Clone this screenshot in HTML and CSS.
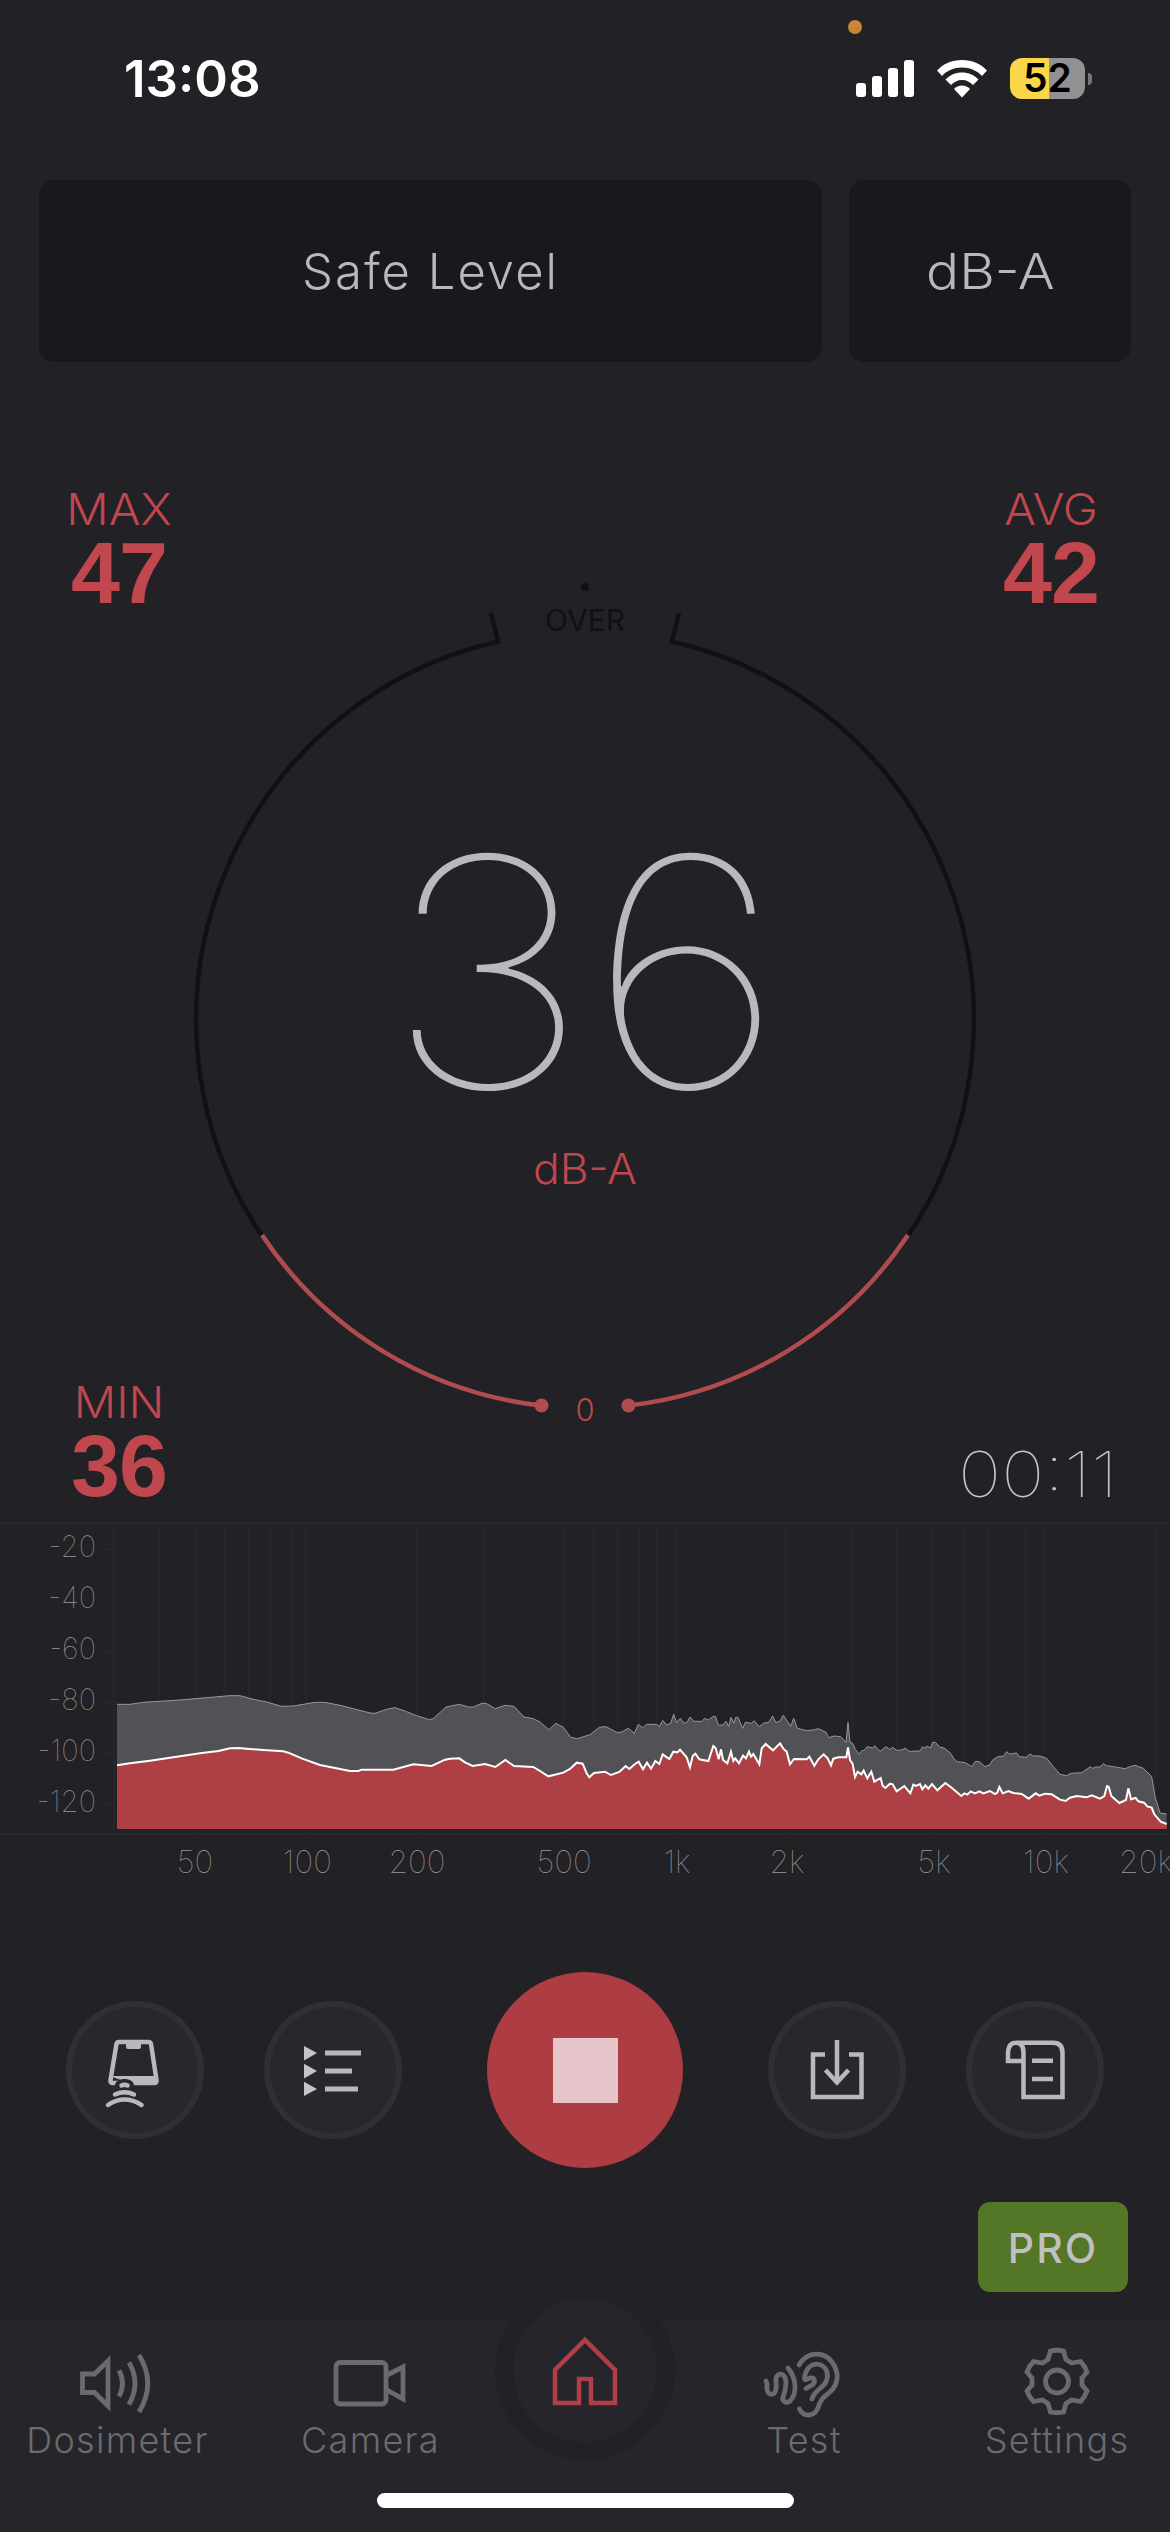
FILE: index.html
```html
<!DOCTYPE html>
<html lang="en">
<head>
  <meta charset="UTF-8">
  <title>Sound Meter</title>
  <link rel="stylesheet" href="styles.css">
</head>
<body>
  <div class="status-bar">
    <span class="mic-dot"></span>
    <span class="time">13:08</span>
    <div class="status-icons">
      <svg class="signal" viewBox="0 0 58 38">
        <rect x="0" y="23" width="10" height="14" rx="3"/>
        <rect x="16" y="16" width="10" height="21" rx="3"/>
        <rect x="32" y="8" width="10" height="29" rx="3"/>
        <rect x="48" y="0" width="10" height="37" rx="3"/>
      </svg>
      <svg class="wifi" viewBox="0 0 50 38">
        <path d="M25 0C35 0 44 4 50 10.500L45 16C40 10.500 33 7.500 25 7.500S10 10.500 5 16L0 10.500C6 4 15 0 25 0Z"/>
        <path d="M25 12.500C31.500 12.500 37 15 41.500 19.500L36 25C33 22 29.500 20 25 20S17 22 14 25L8.500 19.500C13 15 18.500 12.500 25 12.500Z"/>
        <path d="M25 25.500C28 25.500 31 27 33 29L25 37.500L17 29C19 27 22 25.500 25 25.500Z"/>
      </svg>
      <div class="battery"><span>52</span></div>
    </div>
  </div>

  <div class="top-row">
    <div class="card level">Safe Level</div>
    <div class="card unit"><span>dB-A</span></div>
  </div>

  <div class="meter">
    <svg class="dial" viewBox="0 362 1170 1148">
      <circle class="dark-dot" cx="585" cy="587" r="4"/>
      <text class="over" x="585" y="631" textLength="80">OVER</text>
      <path class="arc" d="M491 613L498 641.500A388 388 0 0 0 262 1236"/>
      <path class="arc" d="M679 613L672 641.500A388 388 0 0 1 908 1236"/>
      <path class="arc active" d="M262 1235A388 388 0 0 0 541 1405.500"/>
      <path class="arc active" d="M908 1235A388 388 0 0 1 629 1405.500"/>
      <circle class="red-dot" cx="541.500" cy="1405.500" r="7"/>
      <circle class="red-dot" cx="628.500" cy="1405.500" r="7"/>
      <text class="zero" x="585" y="1421">0</text>
      <text class="value" transform="translate(585 1088) scale(1.09 1)">36</text>
      <text class="value-unit" x="585" y="1184" textLength="104" lengthAdjust="spacingAndGlyphs">dB-A</text>
    </svg>
    <div class="readouts">
      <div class="readout-row">
        <div class="readout"><span>MAX</span><b>47</b></div>
        <div class="readout"><span>AVG</span><b>42</b></div>
      </div>
      <div class="readout-row">
        <div class="readout"><span>MIN</span><b>36</b></div>
        <div class="timer">00:11</div>
      </div>
    </div>
  </div>

  <!-- spectrum, 3 units per pixel -->
  <svg class="spectrum" viewBox="0 0 3510 1140">
    <path class="rule" d="M0 40H3510M0 972H3510"/>
    <path class="grid" d="M342 44V962M477 44V962M585 44V988M675 44V962M747 44V962M810 44V962M874 44V962M918 44V988M1251 44V988M1449 44V962M1584 44V962M1692 44V988M1782 44V962M1854 44V962M1917 44V962M1971 44V962M2025 44V988M2358 44V988M2556 44V962M2691 44V962M2799 44V988M2889 44V962M2961 44V962M3024 44V962M3078 44V962M3132 44V988M3465 44V962M3433 962V988"/>
    <path class="grid" d="M315 118H342M315 271H342M315 424H342M315 577H342M315 730H342M315 883H342"/>
    <polygon class="peak-fill" points="351,957 351,583 390,583 430,577 540,570 585,566 690,557 720,557 760,568 800,576 845,589 880,588 945,577 975,577 1020,586 1060,596 1110,609 1125,610 1160,598 1185,593 1220,605 1250,617 1288,629 1300,626 1338,591 1378,583 1405,591 1420,591 1445,580 1458,580 1486,596 1515,586 1542,589 1572,621 1600,626 1620,636 1646,659 1668,640 1690,652 1712,682 1732,686 1770,674 1798,652 1818,650 1852,668 1865,666 1885,655 1903,670 1915,643 1928,653 1940,643 1970,643 1978,650 1988,631 2000,645 2012,640 2021,613 2030,638 2041,625 2052,640 2062,636 2070,621 2082,634 2106,634 2114,625 2125,630 2140,619 2147,620 2155,646 2168,645 2178,634 2186,650 2193,622 2202,640 2207,622 2214,622 2228,655 2236,637 2255,640 2262,632 2278,650 2290,640 2306,637 2318,618 2328,638 2340,633 2350,616 2372,649 2381,625 2392,655 2420,662 2440,660 2455,656 2478,667 2486,683 2502,678 2522,680 2538,697 2544,637 2550,697 2558,700 2566,718 2578,733 2585,722 2591,722 2602,710 2618,714 2624,707 2640,724 2658,710 2668,718 2678,712 2690,721 2706,720 2715,714 2728,724 2760,723 2768,710 2775,715 2780,708 2792,714 2798,697 2806,697 2820,712 2832,714 2852,730 2862,747 2872,755 2895,758 2916,770 2926,754 2938,755 2955,770 2970,764 2978,750 2995,739 3010,739 3020,725 3028,732 3050,729 3058,740 3078,742 3090,732 3100,738 3120,738 3140,745 3160,770 3180,793 3200,797 3213,790 3245,788 3272,770 3278,776 3285,771 3300,771 3310,761 3320,767 3340,770 3375,776 3390,770 3405,766 3430,775 3455,800 3465,860 3480,909 3500,912 3500,957"/>
    <polyline class="peak-line" points="351,583 390,583 430,577 540,570 585,566 690,557 720,557 760,568 800,576 845,589 880,588 945,577 975,577 1020,586 1060,596 1110,609 1125,610 1160,598 1185,593 1220,605 1250,617 1288,629 1300,626 1338,591 1378,583 1405,591 1420,591 1445,580 1458,580 1486,596 1515,586 1542,589 1572,621 1600,626 1620,636 1646,659 1668,640 1690,652 1712,682 1732,686 1770,674 1798,652 1818,650 1852,668 1865,666 1885,655 1903,670 1915,643 1928,653 1940,643 1970,643 1978,650 1988,631 2000,645 2012,640 2021,613 2030,638 2041,625 2052,640 2062,636 2070,621 2082,634 2106,634 2114,625 2125,630 2140,619 2147,620 2155,646 2168,645 2178,634 2186,650 2193,622 2202,640 2207,622 2214,622 2228,655 2236,637 2255,640 2262,632 2278,650 2290,640 2306,637 2318,618 2328,638 2340,633 2350,616 2372,649 2381,625 2392,655 2420,662 2440,660 2455,656 2478,667 2486,683 2502,678 2522,680 2538,697 2544,637 2550,697 2558,700 2566,718 2578,733 2585,722 2591,722 2602,710 2618,714 2624,707 2640,724 2658,710 2668,718 2678,712 2690,721 2706,720 2715,714 2728,724 2760,723 2768,710 2775,715 2780,708 2792,714 2798,697 2806,697 2820,712 2832,714 2852,730 2862,747 2872,755 2895,758 2916,770 2926,754 2938,755 2955,770 2970,764 2978,750 2995,739 3010,739 3020,725 3028,732 3050,729 3058,740 3078,742 3090,732 3100,738 3120,738 3140,745 3160,770 3180,793 3200,797 3213,790 3245,788 3272,770 3278,776 3285,771 3300,771 3310,761 3320,767 3340,770 3375,776 3390,770 3405,766 3430,775 3455,800 3465,860 3480,909 3500,912"/>
    <polygon class="live-fill" points="351,957 351,766 390,760 450,752 510,743 600,730 655,723 690,715 716,714 740,716 790,720 850,724 865,728 905,745 960,765 1020,777 1050,783 1075,783 1085,779 1180,779 1240,763 1295,768 1335,749 1350,746 1378,745 1395,757 1418,768 1455,762 1486,771 1516,750 1542,768 1600,771 1620,783 1645,799 1690,788 1710,777 1730,758 1748,761 1760,790 1768,802 1782,789 1815,785 1833,795 1858,786 1877,768 1888,777 1905,762 1916,755 1929,778 1941,758 1953,776 1966,753 1978,762 1988,733 2008,747 2020,725 2032,727 2040,719 2060,742 2070,772 2078,738 2086,731 2098,748 2125,753 2140,708 2147,714 2156,748 2163,718 2169,750 2182,760 2193,725 2200,753 2206,745 2217,760 2229,737 2238,745 2247,725 2253,740 2260,732 2278,763 2285,715 2297,702 2319,721 2340,700 2350,716 2360,725 2370,763 2382,747 2420,748 2428,740 2443,767 2455,748 2471,733 2483,745 2493,766 2500,746 2515,742 2539,742 2544,712 2550,750 2558,762 2565,801 2573,785 2584,793 2591,782 2602,805 2614,785 2623,815 2642,804 2648,827 2656,834 2670,821 2678,823 2690,844 2713,828 2731,850 2740,824 2748,828 2760,822 2767,838 2776,826 2785,836 2796,822 2812,841 2836,819 2855,833 2884,858 2893,850 2902,854 2912,844 2925,850 2938,844 2950,850 2970,843 2985,852 2992,848 2998,831 3008,850 3025,843 3040,849 3065,852 3086,866 3107,850 3118,857 3135,851 3155,853 3180,869 3197,873 3210,863 3230,858 3260,862 3275,856 3300,866 3313,858 3321,828 3326,830 3334,858 3358,879 3378,870 3385,835 3393,868 3407,864 3415,874 3432,878 3442,889 3455,893 3463,913 3482,935 3500,942 3500,957"/>
    <polyline class="live-line" points="351,766 390,760 450,752 510,743 600,730 655,723 690,715 716,714 740,716 790,720 850,724 865,728 905,745 960,765 1020,777 1050,783 1075,783 1085,779 1180,779 1240,763 1295,768 1335,749 1350,746 1378,745 1395,757 1418,768 1455,762 1486,771 1516,750 1542,768 1600,771 1620,783 1645,799 1690,788 1710,777 1730,758 1748,761 1760,790 1768,802 1782,789 1815,785 1833,795 1858,786 1877,768 1888,777 1905,762 1916,755 1929,778 1941,758 1953,776 1966,753 1978,762 1988,733 2008,747 2020,725 2032,727 2040,719 2060,742 2070,772 2078,738 2086,731 2098,748 2125,753 2140,708 2147,714 2156,748 2163,718 2169,750 2182,760 2193,725 2200,753 2206,745 2217,760 2229,737 2238,745 2247,725 2253,740 2260,732 2278,763 2285,715 2297,702 2319,721 2340,700 2350,716 2360,725 2370,763 2382,747 2420,748 2428,740 2443,767 2455,748 2471,733 2483,745 2493,766 2500,746 2515,742 2539,742 2544,712 2550,750 2558,762 2565,801 2573,785 2584,793 2591,782 2602,805 2614,785 2623,815 2642,804 2648,827 2656,834 2670,821 2678,823 2690,844 2713,828 2731,850 2740,824 2748,828 2760,822 2767,838 2776,826 2785,836 2796,822 2812,841 2836,819 2855,833 2884,858 2893,850 2902,854 2912,844 2925,850 2938,844 2950,850 2970,843 2985,852 2992,848 2998,831 3008,850 3025,843 3040,849 3065,852 3086,866 3107,850 3118,857 3135,851 3155,853 3180,869 3197,873 3210,863 3230,858 3260,862 3275,856 3300,866 3313,858 3321,828 3326,830 3334,858 3358,879 3378,870 3385,835 3393,868 3407,864 3415,874 3432,878 3442,889 3455,893 3463,913 3482,935 3500,942"/>
    <g class="y-labels">
      <text x="288" y="142">-20</text>
      <text x="288" y="295">-40</text>
      <text x="288" y="448">-60</text>
      <text x="288" y="601">-80</text>
      <text x="288" y="754">-100</text>
      <text x="288" y="907">-120</text>
    </g>
    <g class="x-labels">
      <text x="585" y="1089">50</text>
      <text x="922" y="1089">100</text>
      <text x="1251" y="1089">200</text>
      <text x="1692" y="1089">500</text>
      <text x="2031" y="1089">1k</text>
      <text x="2361" y="1089">2k</text>
      <text x="2802" y="1089">5k</text>
      <text x="3138" y="1089">10k</text>
      <text x="3438" y="1089">20k</text>
    </g>
  </svg>

  <div class="controls">
    <div class="round">
      <svg viewBox="0 0 138 138">
        <path d="M53 41H82.500Q84.500 41 85 43L90.500 79Q91 82 88 82H47Q44 82 44.500 79L50.500 43Q51 41 53 41Z"/>
        <path class="solid" d="M60 41H75V46Q75 48 73 48H62Q60 48 60 46ZM44 75H91V82Q91 84 88 84H68"/>
        <path class="cutout" d="M49 87V84C50 76 67 76 68 84V87Z"/>
        <path class="wave" d="M55.500 84.500Q58.500 83 61.500 84.500M49 93.500Q58.500 89 68 93.500M42 104Q58.500 93 75.500 104"/>
      </svg>
    </div>
    <div class="round">
      <svg viewBox="0 0 138 138">
        <path class="arrows" d="M40 45L53 52L40 59.500ZM40 62.700L53 70L40 77.500ZM40 80.700L53 88L40 95Z"/>
        <path class="lines" d="M61 52H97M61 70H88M61 88H94"/>
      </svg>
    </div>
    <div class="stop"><span></span></div>
    <div class="round">
      <svg viewBox="0 0 138 138">
        <path d="M57 53.500H45V96H93.500V53.500H81M69 39V81M57.500 69L69 81.500L80.500 69"/>
      </svg>
    </div>
    <div class="round">
      <svg viewBox="0 0 138 138">
        <path d="M49.500 41.800H87Q96.500 41.800 96.500 52V96H57.500V52Q57.500 41.800 50 41.800T42 52V60H57M66 59.700H87M66 78H87"/>
      </svg>
    </div>
  </div>

  <div class="pro-row">
    <div class="pro">PRO</div>
  </div>

  <div class="tab-bar">
    <div class="tab">
      <svg viewBox="72 40 84 84">
        <path d="M81.500 74V92.500H93.500L107 106V61L93.500 74ZM118 70.500Q125 83 118 96.500M128 62.500Q140 83 128 104.500M138 55Q155.500 83 138 112"/>
      </svg>
      <span>Dosimeter</span>
    </div>
    <div class="tab">
      <svg viewBox="325 40 84 84">
        <rect x="335" y="62.500" width="50" height="41.500" rx="4"/>
        <path d="M386 75L402 67V99L386 90"/>
      </svg>
      <span>Camera</span>
    </div>
    <div class="home">
      <svg viewBox="543 28 84 84">
        <path d="M555 70V103H579V79H591V103H615V70L585 40Z"/>
      </svg>
    </div>
    <div class="tab">
      <svg class="ear" viewBox="759 40 84 84">
        <path d="M799 65C807 51 824 51 832 62C840 73 838 84 831 91C824 97 821 99 819 105C816 117 804 118 799.500 109"/>
        <path d="M812 99C814 89 827 88 827.500 76C827 62 811 60 806 72C802 82 806 80 810 78C815 77 816 82 812 85L806 88.500"/>
        <path d="M788 68C797 79 797 94 790 101C786 104 782 101 783 97C785 92 786 90 786 82C785 72 777 72 776 79C775.500 83 777 85 776 89C775 96 768 96 767 89C766.500 85 768 84 766 81"/>
      </svg>
      <span>Test</span>
    </div>
    <div class="tab">
      <svg viewBox="1010 40 84 84">
        <circle cx="1055" cy="81.500" r="11.500"/>
        <path d="M1048.500 51Q1055 49.500 1061.500 51L1064 59.500L1069.500 63L1078.500 61.500Q1083 66 1085 72L1080 78V85L1085 91Q1083 97 1078.500 101.500L1069.500 100L1064 103.500L1061.500 112Q1055 113.500 1048.500 112L1046 103.500L1040.500 100L1031.500 101.500Q1027 97 1025 91L1030 85V78L1025 72Q1027 66 1031.500 61.500L1040.500 63L1046 59.500Z"/>
      </svg>
      <span>Settings</span>
    </div>
  </div>
  <div class="home-indicator"></div>
</body>
</html>
```
FILE: styles.css
```css
* {
  box-sizing: border-box;
}

body {
  position: relative;
  display: flex;
  flex-direction: column;
  width: 1170px;
  height: 2532px;
  margin: 0;
  overflow: hidden;
  background-color: #222125;
  font-family: Inter, "Liberation Sans", sans-serif;
}

svg {
  display: block;
}

/* Status bar */
.status-bar {
  display: flex;
  justify-content: space-between;
  align-items: center;
  height: 157px;
  margin-bottom: 23px;
  padding: 0 78px 0 124px;
}

.mic-dot {
  position: absolute;
  top: 20px;
  left: 848px;
  width: 14px;
  height: 14px;
  border-radius: 50%;
  background-color: #c98531;
}

.time {
  color: #fff;
  font-size: 51px;
  font-weight: 600;
  line-height: 56px;
}

.status-icons {
  display: flex;
  align-items: center;
  gap: 23px;
}

.signal {
  width: 58px;
  height: 38px;
  fill: #fff;
}

.wifi {
  width: 50px;
  height: 38px;
  fill: #fff;
}

.battery {
  position: relative;
  width: 75px;
  height: 41px;
  margin-right: 7px;
  border-radius: 12px;
  background: linear-gradient(to right, #f9d748 39px, #919193 39px);
  color: #000;
  font-size: 39px;
  font-weight: 600;
  line-height: 40px;
  text-align: center;
}

.battery::after {
  content: "";
  position: absolute;
  top: 15px;
  right: -7px;
  width: 4px;
  height: 12px;
  border-radius: 0 4px 4px 0;
  background-color: #77777a;
}

/* Level and weighting cards */
.top-row {
  display: flex;
  gap: 27px;
  padding: 0 39px;
}

.card {
  height: 182px;
  border-radius: 15px;
  background-color: #19181c;
  color: #b9b8c0;
  font-size: 49px;
  font-weight: 300;
  line-height: 183px;
  text-align: center;
}

.level {
  flex: 1;
  letter-spacing: 2px;
}

.unit {
  width: 282px;
  color: #bab8b8;
}

.unit span {
  display: inline-block;
  transform: scaleX(1.12);
}

/* Dial */
.meter {
  display: grid;
  height: 1148px;
}

.dial,
.readouts {
  grid-area: 1 / 1;
  width: 1170px;
  height: 1148px;
}

.dial text {
  text-anchor: middle;
}

.arc {
  fill: none;
  stroke: #111113;
  stroke-width: 4.500;
}

.arc.active {
  stroke: #b04c4f;
}

.dark-dot {
  fill: #111113;
}

.red-dot {
  fill: #b04c4f;
}

.over {
  fill: #111113;
  font-size: 30px;
  font-weight: 400;
}

.zero {
  fill: #b04c4f;
  font-size: 31px;
  font-weight: 300;
}

.value {
  fill: #b9b8c0;
  font-size: 319px;
  font-weight: 100;
}

.value-unit {
  fill: #bf474d;
  font-size: 42px;
  font-weight: 300;
}

.readouts {
  display: flex;
  flex-direction: column;
  justify-content: space-between;
  padding: 126px 49px 2px 49px;
}

.readout-row {
  display: flex;
  justify-content: space-between;
  align-items: flex-end;
}

.readout {
  display: flex;
  flex-direction: column;
  width: 140px;
  color: #bf474d;
  text-align: center;
}

.readout span {
  font-size: 44px;
  font-weight: 300;
  line-height: 43px;
  transform: scaleX(1.07);
}

.readout b {
  font-family: "Liberation Sans", Arial, sans-serif;
  font-size: 88px;
  line-height: 84px;
  letter-spacing: -1px;
}

.timer {
  margin: 0 3px 2px 0;
  color: #c4c4ca;
  font-size: 63px;
  font-weight: 100;
  line-height: 64px;
  transform: scaleX(1.16);
  transform-origin: right;
}

/* Spectrum */
.spectrum {
  width: 1170px;
  height: 380px;
}

.rule {
  stroke: #2c2c2f;
  stroke-width: 4;
}

.grid {
  stroke: #26262a;
  stroke-width: 8;
}

.peak-fill {
  fill: #525156;
}

.peak-line {
  fill: none;
  stroke: #98979b;
  stroke-width: 3;
}

.live-fill {
  fill: #ae3f45;
}

.live-line {
  fill: none;
  stroke: #fff;
  stroke-width: 6;
}

.y-labels,
.x-labels {
  fill: #98989b;
  font-weight: 100;
}

.y-labels {
  font-size: 88px;
  text-anchor: end;
}

.x-labels {
  font-size: 95px;
  text-anchor: middle;
}

/* Buttons */
.controls {
  display: flex;
  justify-content: space-between;
  align-items: center;
  height: 196px;
  margin-top: 82px;
  padding: 0 66px;
}

.round {
  width: 138px;
  height: 138px;
  border-radius: 50%;
  background-color: #28272e;
  box-shadow: inset 0 0 0 6px #2e3035;
}

.round svg {
  fill: none;
  stroke: #b9b8c0;
  stroke-width: 4.500;
}

.round .solid {
  fill: #b9b8c0;
  stroke: none;
}

.round .cutout {
  fill: #28272e;
  stroke: none;
}

.round .wave {
  stroke-linecap: round;
}

.round .arrows {
  fill: #c4c4c4;
  stroke: none;
}

.round .lines {
  stroke-width: 5;
}

.stop {
  display: flex;
  justify-content: center;
  align-items: center;
  width: 196px;
  height: 196px;
  margin: 0 -6px;
  border-radius: 50%;
  background-color: #ae3c43;
}

.stop span {
  width: 65px;
  height: 65px;
  background-color: #e6c4ca;
}

.round:nth-child(2) {
  margin-left: -31px;
}

.round:nth-child(4) {
  margin-right: -31px;
}

.pro-row {
  display: flex;
  justify-content: flex-end;
  margin-top: 34px;
  padding-right: 42px;
}

.pro {
  width: 150px;
  height: 90px;
  border-radius: 12px;
  background-color: #537627;
  color: #c0bfc1;
  font-size: 41px;
  font-weight: 500;
  line-height: 93px;
  letter-spacing: 2px;
  text-align: center;
}

/* Tab bar */
.tab-bar {
  display: grid;
  grid-template-columns: 229px 277px 158px 274px 232px;
  height: 213px;
  margin-top: 27px;
  background-color: #26252b;
}

.tab {
  display: flex;
  flex-direction: column;
  align-items: center;
  padding-top: 21px;
  color: #6b6b6b;
  font-size: 36px;
  font-weight: 300;
  letter-spacing: 1.3px;
}

.tab svg {
  width: 84px;
  height: 84px;
  fill: none;
  stroke: #6b6b6b;
  stroke-width: 4.800;
}

.tab span {
  margin: -3px -6px 0 0;
  line-height: 38px;
}

.tab .ear {
  stroke-linecap: round;
}

.home {
  justify-self: center;
  display: flex;
  justify-content: center;
  align-items: center;
  width: 180px;
  height: 180px;
  margin: -39px -11px 0;
  border: 18px solid #222125;
  border-radius: 50%;
  background-color: #26252b;
}

.home svg {
  flex: none;
  width: 84px;
  height: 84px;
  fill: none;
  stroke: #b03e45;
  stroke-width: 4.500;
}

.home-indicator {
  position: absolute;
  bottom: 24px;
  left: 377px;
  width: 417px;
  height: 15px;
  border-radius: 8px;
  background-color: #fff;
}
```
